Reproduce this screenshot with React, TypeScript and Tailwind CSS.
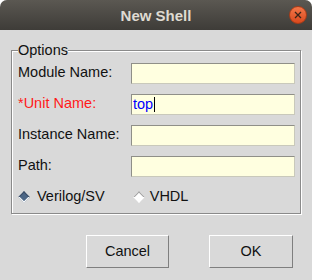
import React from "react";

function Entry({ value, cursor }: { value?: string; cursor?: boolean }) {
  return (
    <div className="w-[164px] h-[21px] bg-[#ffffe0] border border-t-[#8f8f88] border-l-[#8f8f88] border-b-[#c9c9bb] border-r-[#c9c9bb] flex items-center pl-[1px] text-[14.5px] leading-none">
      {value ? <span className="text-[#0000ff]">{value}</span> : null}
      {cursor ? <span className="w-[1px] h-[15px] bg-black ml-[1px]" /> : null}
    </div>
  );
}

function Row({ label, red, children }: { label: string; red?: boolean; children: React.ReactNode }) {
  return (
    <div className="flex items-center h-[21px]">
      <div className={"w-[113px] text-[14.5px] leading-none -mt-[2px] " + (red ? "text-[#ff1a1a]" : "text-[#111]")}>{label}</div>
      {children}
    </div>
  );
}

export default function App() {
  return (
    <div
      className="w-[312px] h-[280px] bg-[#d9d9d9] rounded-t-[7px] overflow-hidden flex flex-col"
      style={{ fontFamily: '"Liberation Sans", Arial, sans-serif' }}
    >
      <div className="h-[30px] shrink-0 relative flex items-center justify-center bg-gradient-to-b from-[#5b5852] to-[#3e3c38]">
        <span className="text-[15px] font-bold text-[#dfdbd2] leading-none">New Shell</span>
        <div className="absolute left-[289px] top-[6px] w-[18px] h-[18px] rounded-full bg-gradient-to-b from-[#f37748] to-[#d9481c] border border-[#a93c18] flex items-center justify-center">
          <svg width="8" height="8" viewBox="0 0 8 8">
            <path d="M1 1 L7 7 M7 1 L1 7" stroke="#3a2418" strokeWidth="1.3" />
          </svg>
        </div>
      </div>
      <div className="px-[11px] pt-[12px]">
        <fieldset className="border border-[#8a8a8a] pl-[6px] pr-[5px] pt-[5px] pb-[6px] shadow-[inset_1px_1px_0_#ffffff,1px_1px_0_#ffffff] m-0 min-w-0">
          <legend className="px-0 text-[14.5px] leading-[16px] text-[#111] bg-[#d9d9d9]">Options</legend>
          <div className="flex flex-col gap-[10px]">
            <Row label="Module Name:">
              <Entry />
            </Row>
            <Row label="*Unit Name:" red>
              <Entry value="top" cursor />
            </Row>
            <Row label="Instance Name:">
              <Entry />
            </Row>
            <Row label="Path:">
              <Entry />
            </Row>
          </div>
          <div className="flex items-center h-[20px] mt-[10px] text-[14.5px] text-[#111] leading-none">
            <div className="flex items-center">
              <span className="w-[8px] h-[8px] rotate-45 bg-[#4c6685] border border-t-[#3a4d66] border-l-[#3a4d66] border-b-[#ffffff] border-r-[#ffffff] ml-[2px]" />
              <span className="ml-[9px] -mt-[2px]">Verilog/SV</span>
            </div>
            <div className="flex items-center ml-[30px]">
              <span className="w-[8px] h-[8px] rotate-45 bg-white border border-t-[#a0a0a0] border-l-[#a0a0a0] border-b-[#ffffff] border-r-[#ffffff]" />
              <span className="ml-[7px] -mt-[2px]">VHDL</span>
            </div>
          </div>
        </fieldset>
      </div>
      <div className="flex mt-[21px] pl-[86px] gap-[40px]">
        <button className="w-[83px] h-[33px] bg-[#d9d9d9] border border-t-white border-l-white border-b-[#7f7f7f] border-r-[#7f7f7f] text-[14.5px] text-[#111] leading-none">
          Cancel
        </button>
        <button className="w-[84px] h-[33px] bg-[#d9d9d9] border border-t-white border-l-white border-b-[#7f7f7f] border-r-[#7f7f7f] text-[14.5px] text-[#111] leading-none">
          OK
        </button>
      </div>
    </div>
  );
}
